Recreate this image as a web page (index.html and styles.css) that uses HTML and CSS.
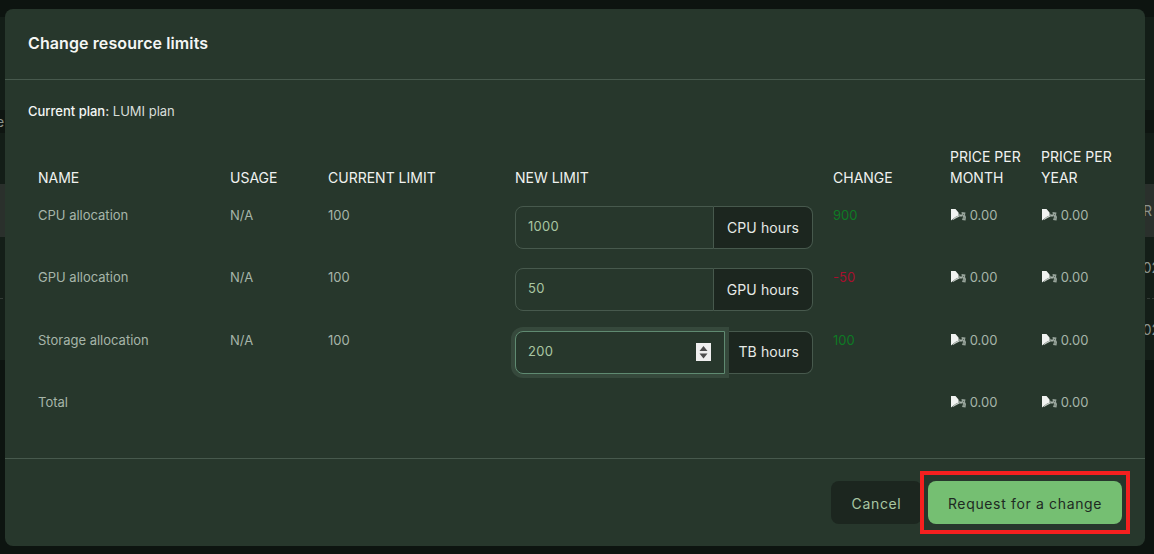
FILE: index.html
```html
<!doctype html>
<html lang="en">
<head>
<meta charset="utf-8">
<title>Change resource limits</title>
<link rel="stylesheet" href="styles.css">
</head>
<body>

	<svg class="defs" width="0" height="0">
		<symbol id="coin" viewBox="0 0 16 14">
			<path fill="#f1f3f1" d="M1 1H5.500L8.500 4.500V7.500L5.500 9 1 12.500Z"/>
			<path fill="#c3cbc5" d="M8.500 5 9.500 6V8.500L6.500 10 3 12 2.500 11.500 5.500 9 8.500 7.500Z"/>
			<path fill="#aab4ac" d="M9.500 6.500H12V8.500H9.500Z"/>
			<path fill="#97a39a" d="M11.500 4 15.500 4.500 15 7 16 9 15.500 12.500 12 12 13 9 12 7.500Z"/>
			<path fill="#5d6b62" d="M13 6h1v1h-1ZM13.500 9.500h1v1h-1Z"/>
		</symbol>
	</svg>

	<div class="page">
		<div class="bg-row bg-a"></div>
		<div class="bg-row bg-b"></div>
		<div class="bg-row bg-c"><span>e</span></div>
		<div class="bg-row bg-b2"></div>
		<div class="bg-row bg-head"><span></span><span>R</span></div>
		<div class="bg-row bg-data"><span></span><span>02</span></div>
		<div class="bg-row bg-data bg-dash"><span></span><span>02</span></div>
	</div>

	<div class="modal">

		<div class="modal-head">Change resource limits</div>

		<div class="modal-body">

			<p class="plan"><b>Current plan:</b> LUMI plan</p>

			<table class="limits">
				<thead>
					<tr>
						<th class="c-name">NAME</th>
						<th class="c-usage">USAGE</th>
						<th class="c-current">CURRENT LIMIT</th>
						<th class="c-new">NEW LIMIT</th>
						<th class="c-change">CHANGE</th>
						<th class="c-month">PRICE PER MONTH</th>
						<th>PRICE PER YEAR</th>
					</tr>
				</thead>
				<tbody>
					<tr>
						<td>CPU allocation</td>
						<td>N/A</td>
						<td>100</td>
						<td>
							<div class="group">
								<input class="field" type="text" value="1000">
								<span class="addon">CPU hours</span>
							</div>
						</td>
						<td class="up">900</td>
						<td><svg class="coin"><use href="#coin"/></svg> 0.00</td>
						<td><svg class="coin"><use href="#coin"/></svg> 0.00</td>
					</tr>
					<tr>
						<td>GPU allocation</td>
						<td>N/A</td>
						<td>100</td>
						<td>
							<div class="group">
								<input class="field" type="text" value="50">
								<span class="addon">GPU hours</span>
							</div>
						</td>
						<td class="down">-50</td>
						<td><svg class="coin"><use href="#coin"/></svg> 0.00</td>
						<td><svg class="coin"><use href="#coin"/></svg> 0.00</td>
					</tr>
					<tr>
						<td>Storage allocation</td>
						<td>N/A</td>
						<td>100</td>
						<td>
							<div class="group focused">
								<input class="field" type="text" value="200">
								<svg class="spin" viewBox="0 0 15 18">
									<rect width="15" height="18" fill="#efefef"/>
									<path fill="#4d4d4d" d="M7.500 3 11.500 8H3.500ZM3.500 10.500h8L7.500 15.500Z"/>
								</svg>
								<span class="addon">TB hours</span>
							</div>
						</td>
						<td class="up">100</td>
						<td><svg class="coin"><use href="#coin"/></svg> 0.00</td>
						<td><svg class="coin"><use href="#coin"/></svg> 0.00</td>
					</tr>
					<tr class="total">
						<td>Total</td>
						<td></td>
						<td></td>
						<td></td>
						<td></td>
						<td><svg class="coin"><use href="#coin"/></svg> 0.00</td>
						<td><svg class="coin"><use href="#coin"/></svg> 0.00</td>
					</tr>
				</tbody>
			</table>

		</div>

		<div class="modal-foot">
			<button class="btn btn-cancel">Cancel</button>
			<button class="btn btn-main">Request for a change</button>
		</div>

	</div>

</body>
</html>
```

FILE: styles.css
```css
html, body { height: 100%; margin: 0; }
body { background-color: #0d1410; color: #a6b5a9; font: 13px Inter, "Liberation Sans", sans-serif; overflow: hidden; }

.defs { display: block; height: 0; }

/* page behind the dialog */
.page { display: flex; flex-direction: column; height: 554px; }
.bg-row { align-items: center; color: #8b938d; display: flex; font-size: 14px; justify-content: space-between; }
.bg-a { background-color: #0d1410; height: 17px; }
.bg-b { background-color: #131d17; height: 93px; }
.bg-c { background-color: #0e1511; height: 23px; margin-left: -4px; }
.bg-b2 { background-color: #131d17; height: 51px; }
.bg-head { background-color: #2a302c; height: 53px; padding-right: 2px; }
.bg-data { background-color: #141e18; height: 61px; margin-right: -6px; }
.bg-dash { border-top: 1px dashed #333b36; }

/* dialog */
.modal { background-color: #27372c; border-radius: 8px; display: flex; flex-direction: column; height: 537px; left: 5px; position: absolute; top: 9px; width: 1140px; }

.modal-head { border-bottom: 1px solid #47594d; box-sizing: border-box; color: #f4f6f4; flex: none; font-size: 16px; font-weight: 600; height: 71px; letter-spacing: 0.1px; line-height: 69px; padding-left: 23px; }

.modal-body { flex: 1; padding: 0 0 0 23px; }

.plan { color: #d8ddd9; font-size: 13px; line-height: 16px; margin: 23px 0 0; }
.plan b { color: #f4f6f4; font-weight: 500; }

.limits { border-collapse: collapse; margin-top: 27px; table-layout: fixed; width: 1117px; }
.limits th { color: #f0f2f0; font-size: 14px; font-weight: 400; line-height: 21px; padding: 0 10px 9px; text-align: left; vertical-align: bottom; }
.limits td { box-sizing: border-box; height: 62.400px; line-height: 16px; padding: 10px 10px 0; vertical-align: top; }

.c-name { width: 172px; }
.c-usage { width: 78px; }
.c-current { width: 167px; }
.c-new { width: 298px; }
.c-change { width: 97px; }
.c-month { width: 71px; }

.limits .up { color: #0e7a24; }
.limits .down { color: #a80f2e; }

.coin { height: 14px; margin-right: 0; vertical-align: -2px; width: 16px; }

.group { align-items: stretch; display: flex; height: 43px; margin-top: -1px; position: relative; width: 298px; }

.field { background: transparent; border: 1px solid #47594d; border-radius: 8px 0 0 8px; box-sizing: border-box; color: #a9c6a2; flex: 1; font: 13px Inter, "Liberation Sans", sans-serif; letter-spacing: 0.3px; min-width: 0; outline: none; padding: 0 12px 3px; }

.addon { align-items: center; background-color: #1c261f; border: 1px solid #47594d; border-left: none; border-radius: 0 8px 8px 0; box-sizing: border-box; color: #e6eae6; display: flex; font-size: 14px; justify-content: center; letter-spacing: 0.1px; padding: 0 13px; }

.focused .field { background-color: #27372c; border-color: #5f8a71; box-shadow: 0 0 0 4px #36493c; position: relative; z-index: 1; }

.spin { height: 18px; left: 181px; position: absolute; top: 12px; width: 15px; z-index: 2; }

.modal-foot { align-items: center; border-top: 1px solid #47594d; box-sizing: border-box; display: flex; flex: none; gap: 6px; height: 88px; justify-content: flex-end; padding: 0 23px 0 0; position: relative; }

.btn { border: none; border-radius: 8px; font: 400 14px Inter, "Liberation Sans", sans-serif; height: 43px; letter-spacing: 0.65px; padding: 1px 0 0; }
.btn-cancel { background-color: #1c261f; color: #a9c6a2; width: 91px; }
.btn-main { background-color: #75bf72; color: #1e2a22; position: relative; width: 194px; }

/* red annotation box round the main button */
.btn-main::after { border: 4px solid #f5201f; bottom: -10px; content: ""; left: -8px; position: absolute; right: -8px; top: -10px; }
```
